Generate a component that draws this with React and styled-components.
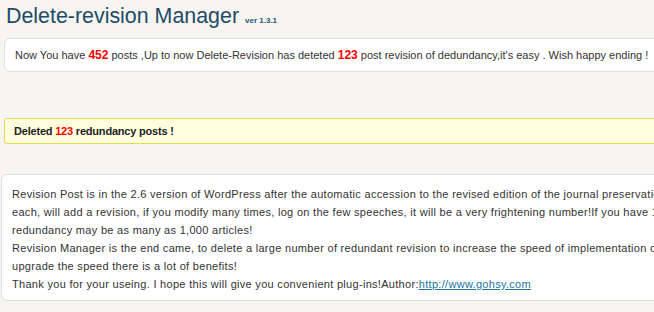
import React from "react";
import styled, { createGlobalStyle } from "styled-components";

const Global = createGlobalStyle`
    html, body {
        margin: 0;
        padding: 0;
        background: #f6f5f0;
        overflow: hidden;
    }
    body {
        font-family: "Liberation Sans", Arial, sans-serif;
        color: #333;
    }
`;

const Wrap = styled.div`
    width: 960px;
    display: flex;
    flex-direction: column;
`;

const Title = styled.h2`
    margin: 0;
    padding: 4px 0 0 6px;
    height: 34px;
    box-sizing: border-box;
    font-size: 21.4px;
    font-weight: normal;
    color: #224b68;
    line-height: 24px;
    white-space: nowrap;

    small {
        font-size: 8px;
        font-weight: bold;
        margin-left: 6px;
        color: #2a5676;
    }
`;

const Box = styled.div`
    margin-left: ${props => props.left}px;
    background: ${props => (props.note ? "#ffffe0" : "#fff")};
    border: 1px solid ${props => (props.note ? "#e6db55" : "#dfdfdf")};
    border-radius: ${props => (props.note ? 3 : 6)}px;
    font-size: 11px;
    font-weight: ${props => (props.note ? "bold" : "normal")};
    color: ${props => (props.note ? "#222" : "#333")};
    white-space: nowrap;
`;

const Info = styled(Box)`
    margin-top: 4px;
    height: 32px;
    display: flex;
    align-items: center;
    padding-left: 10px;
`;

const Notice = styled(Box)`
    margin-top: 46px;
    height: 24px;
    display: flex;
    align-items: center;
    padding-left: 9px;
    letter-spacing: -0.2px;
`;

const About = styled(Box)`
    margin-top: 30px;
    padding: 10px 10px 7px;
    line-height: 18px;
    font-size: 11px;
    letter-spacing: 0.3px;
`;

const Line = styled.div`
    white-space: nowrap;
`;

const Num = styled.b`
    color: #f00;
    font-size: ${props => (props.small ? 11 : 12)}px;
    font-weight: bold;
`;

const Link = styled.a`
    color: #21759b;
    text-decoration: underline;
`;

export default function App() {
    return (
        <Wrap>
            <Global />
            <Title>
                Delete-revision Manager<small>ver 1.3.1</small>
            </Title>
            <Info left={4}>
                Now You have&nbsp;<Num>452</Num>&nbsp;posts ,Up to now Delete-Revision has deteted&nbsp;<Num>123</Num>&nbsp;post revision of dedundancy,it's easy . Wish happy ending !
            </Info>
            <Notice left={4} note>
                Deleted&nbsp;<Num small>123</Num>&nbsp;redundancy posts !
            </Notice>
            <About left={1}>
                <Line>Revision Post is in the 2.6 version of WordPress after the automatic accession to the revised edition of the journal preservation, the article in</Line>
                <Line>each, will add a revision, if you modify many times, log on the few speeches, it will be a very frightening number!If you have 100 posts, the</Line>
                <Line>redundancy may be as many as 1,000 articles!</Line>
                <Line>Revision Manager is the end came, to delete a large number of redundant revision to increase the speed of implementation of the database, the</Line>
                <Line>upgrade the speed there is a lot of benefits!</Line>
                <Line>
                    Thank you for your useing. I hope this will give you convenient plug-ins!Author:<Link href="#">http://www.gohsy.com</Link>
                </Line>
            </About>
        </Wrap>
    );
}
